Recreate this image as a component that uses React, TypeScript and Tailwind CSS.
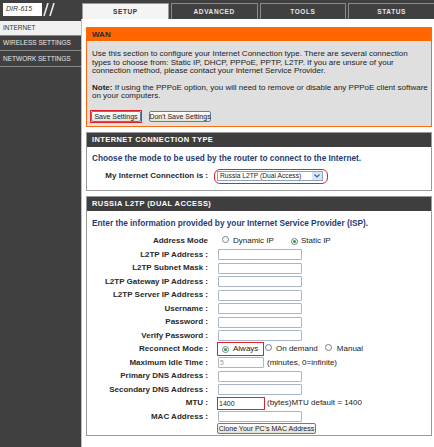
import React from "react";

function Radio({ checked }: { checked?: boolean }) {
  return (
    <span className="inline-flex w-[7px] h-[7px] rounded-full border border-[#6f8090] bg-white items-center justify-center shrink-0">
      {checked && <span className="w-[3px] h-[3px] rounded-full bg-[#2e9a3a]" />}
    </span>
  );
}

function Row({ label, children, className = "h-[13.5px]" }: { label: string; children?: React.ReactNode; className?: string }) {
  return (
    <div className={`flex items-center ${className}`}>
      <div className="w-[121px] text-right font-bold text-[#2a2a2a] text-[8px] whitespace-nowrap">{label}</div>
      <div className="ml-[10px] flex items-center">{children}</div>
    </div>
  );
}

function Field({ value = "", small, muted }: { value?: string; small?: boolean; muted?: boolean }) {
  return (
    <input
      type="text"
      readOnly
      defaultValue={value}
      className={`h-[11px] ${small ? "w-[46px]" : "w-[84px]"} border border-[#a9b6c6] rounded-[1px] bg-white px-[1px] text-[7px] leading-none outline-none ${muted ? "text-[#9a9a9a]" : "text-[#222]"}`}
    />
  );
}

function Btn({ children, className = "" }: { children: React.ReactNode; className?: string }) {
  return (
    <button className={`h-[11px] border border-[#5d7ea6] rounded-[2px] bg-linear-to-b from-white to-[#e4e1d4] text-[7px] leading-none text-[#222] whitespace-nowrap flex items-center justify-center ${className}`}>
      {children}
    </button>
  );
}

function SectionHeader({ children }: { children: React.ReactNode }) {
  return (
    <div className="h-[14px] bg-[#3e3e3e] flex items-center pl-[5px] text-white font-bold text-[7.5px] tracking-[0.4px]">
      {children}
    </div>
  );
}

export default function App() {
  return (
    <div className="w-[434px] h-[447px] overflow-hidden bg-white flex flex-col font-['Liberation_Sans',Arial,sans-serif] text-[8px] text-[#222]">
      <header className="h-[19px] bg-[#404040] flex shrink-0">
        <div className="w-[82px] flex items-start pt-[3px] pl-[3px] shrink-0">
          <div className="w-[39px] h-[13px] bg-white flex items-center pl-[3px] italic text-[7px] text-[#333]">DIR-615</div>
          <svg width="14" height="13" viewBox="0 0 14 13" className="ml-[1px]">
            <line x1="5" y1="0" x2="1" y2="13" stroke="#e8e8e8" strokeWidth="1.6" />
            <line x1="11" y1="0" x2="7" y2="13" stroke="#e8e8e8" strokeWidth="1.6" />
          </svg>
        </div>
        <nav className="flex-1 flex pt-[3px] gap-[2px]">
          <div className="flex-1 bg-[#f4f4f4] border border-b-0 border-[#9a9a9a] flex items-center justify-center font-bold text-[6.5px] tracking-[0.6px] text-[#333]">SETUP</div>
          <div className="flex-1 bg-[#404040] border border-b-0 border-[#8a8a8a] flex items-center justify-center font-bold text-[6.5px] tracking-[0.6px] text-[#e6e6e6]">ADVANCED</div>
          <div className="flex-1 bg-[#404040] border border-b-0 border-[#8a8a8a] flex items-center justify-center font-bold text-[6.5px] tracking-[0.6px] text-[#e6e6e6]">TOOLS</div>
          <div className="flex-1 bg-[#404040] border border-b-0 border-r-0 border-[#8a8a8a] flex items-center justify-center font-bold text-[6.5px] tracking-[0.6px] text-[#e6e6e6]">STATUS</div>
        </nav>
      </header>
      <div className="flex flex-1 min-h-0">
        <aside className="w-[81px] bg-[#404040] pt-[2px] shrink-0 text-[6.5px]">
          <div className="h-[15px] bg-[#f0f0f0] flex items-center pl-[3px] text-[#333] border-b border-[#8a8a8a]">INTERNET</div>
          <div className="h-[15px] flex items-center pl-[3px] text-[#e8e8e8] border-b border-[#8a8a8a]">WIRELESS SETTINGS</div>
          <div className="h-[16px] flex items-center pl-[3px] text-[#e8e8e8] border-b border-[#8a8a8a]">NETWORK SETTINGS</div>
        </aside>
        <main className="flex-1 border-l border-[#bdbdbd] pl-[4px] pr-[4px] pt-[8px] flex flex-col gap-[5px]">
          <section className="border border-[#ff6a10] bg-[#dfdfdf]">
            <div className="h-[13px] bg-[#ff6600] flex items-center pl-[5px] font-bold text-[8px] text-[#2a2a2a]">WAN</div>
            <div className="pl-[5px] pr-[3px] pt-[9px] pb-[3px] leading-[8.5px]">
              <p className="whitespace-nowrap">
                Use this section to configure your Internet Connection type. There are several connection<br />
                types to choose from: Static IP, DHCP, PPPoE, PPTP, L2TP. If you are unsure of your<br />
                connection method, please contact your Internet Service Provider.
              </p>
              <p className="mt-[8px] whitespace-nowrap">
                <b>Note:</b> If using the PPPoE option, you will need to remove or disable any PPPoE client software<br />
                on your computers.
              </p>
              <div className="mt-[9px] -ml-[2px] flex items-center gap-[7px]">
                <div className="border-[1.5px] border-[#e0202a] flex">
                  <Btn className="w-[50px]">Save Settings</Btn>
                </div>
                <Btn className="w-[62px]">Don't Save Settings</Btn>
              </div>
            </div>
          </section>

          <section className="border border-[#9a9a9a] bg-white">
            <SectionHeader>INTERNET CONNECTION TYPE</SectionHeader>
            <div className="pt-[7px] pb-[6px]">
              <p className="pl-[5px] leading-[9px] text-[8.25px] font-bold text-[#1f3d72] whitespace-nowrap">
                Choose the mode to be used by the router to connect to the Internet.
              </p>
              <div className="mt-[6px] flex items-center h-[15px]">
                <div className="w-[121px] text-right font-bold text-[#2a2a2a] whitespace-nowrap">My Internet Connection is :</div>
                <div className="ml-[6px] h-[15px] w-[114px] border-[1.5px] border-[#e0202a] rounded-[6px] flex items-center pl-[2px]">
                  <div className="h-[10px] w-[106px] border border-[#8fa2bb] bg-white flex items-center justify-between pl-[2px] text-[6.7px]">
                    <span>Russia L2TP (Dual Access)</span>
                    <span className="h-full w-[10px] bg-[#dbe5f6] flex items-center justify-center">
                      <svg width="6" height="4" viewBox="0 0 6 4">
                        <polyline points="0.5,0.5 3,3 5.5,0.5" fill="none" stroke="#3b5ea8" strokeWidth="1.2" />
                      </svg>
                    </span>
                  </div>
                </div>
              </div>
            </div>
          </section>

          <section className="border border-[#9a9a9a] bg-white">
            <SectionHeader>RUSSIA L2TP (DUAL ACCESS)</SectionHeader>
            <div className="pt-[8px] pb-[1px]">
              <p className="pl-[5px] leading-[9px] text-[8.25px] font-bold text-[#1f3d72] whitespace-nowrap">
                Enter the information provided by your Internet Service Provider (ISP).
              </p>
              <div className="mt-[6.75px]">
                <Row label="Address Mode">
                  <span className="ml-[4px]"><Radio /></span>
                  <span className="ml-[4px]">Dynamic IP</span>
                  <span className="ml-[17px]"><Radio checked /></span>
                  <span className="ml-[3px]">Static IP</span>
                </Row>
                <Row label="L2TP IP Address :"><Field /></Row>
                <Row label="L2TP Subnet Mask :"><Field /></Row>
                <Row label="L2TP Gateway IP Address :"><Field /></Row>
                <Row label="L2TP Server IP Address :"><Field /></Row>
                <Row label="Username :"><Field /></Row>
                <Row label="Password :"><Field /></Row>
                <Row label="Verify Password :"><Field /></Row>
                <Row label="Reconnect Mode :">
                  <div className="-ml-[1px] h-[14px] w-[47px] border-[1.5px] border-[#e0202a] flex items-center pl-[4px]">
                    <Radio checked />
                    <span className="ml-[4px]">Always</span>
                  </div>
                  <span className="ml-[1px]"><Radio /></span>
                  <span className="ml-[4px]">On demand</span>
                  <span className="ml-[7px]"><Radio /></span>
                  <span className="ml-[5px]">Manual</span>
                </Row>
                <Row label="Maximum Idle Time :">
                  <Field small value="5" muted />
                  <span className="ml-[3px]">(minutes, 0=infinite)</span>
                </Row>
                <Row label="Primary DNS Address :"><Field /></Row>
                <Row label="Secondary DNS Address :"><Field /></Row>
                <Row label="MTU :">
                  <div className="-ml-[1px] h-[13px] w-[48px] border-[1.5px] border-[#e0202a] flex items-center">
                    <input type="text" readOnly defaultValue="1400" className="h-[10px] w-full bg-white px-[1px] text-[7px] leading-none outline-none text-[#222]" />
                  </div>
                  <span className="ml-[2px]">(bytes)MTU default = 1400</span>
                </Row>
                <Row label="MAC Address :"><Field /></Row>
                <Row label="" className="h-[11px]">
                  <Btn className="-ml-[1px] w-[99px] h-[10px]">Clone Your PC's MAC Address</Btn>
                </Row>
              </div>
            </div>
          </section>
        </main>
      </div>
    </div>
  );
}
